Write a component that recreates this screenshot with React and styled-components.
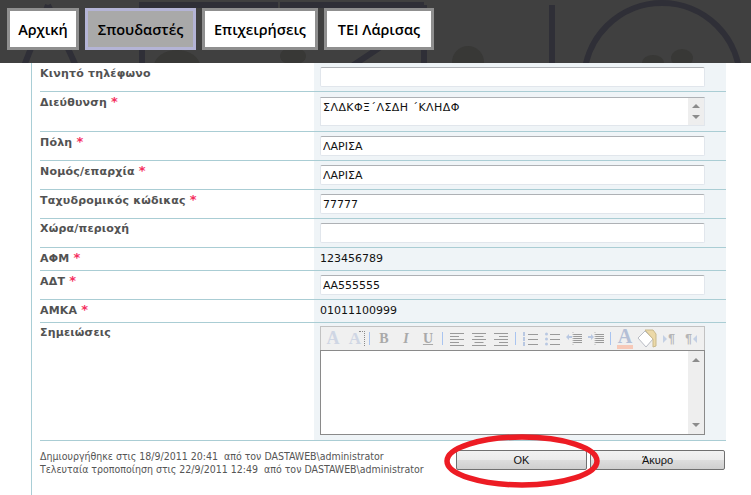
import React from "react";
import styled, { createGlobalStyle } from "styled-components";

const GlobalStyle = createGlobalStyle`
	html, body {
		margin: 0;
		padding: 0;
		background: #fff;
		overflow: hidden;
	}
`;

const TABS = [
	{ label: "Αρχική", width: 72 },
	{ label: "Σπουδαστές", width: 111, active: true },
	{ label: "Επιχειρήσεις", width: 116 },
	{ label: "ΤΕΙ Λάρισας", width: 110 },
];

const App = () => {
	return (
		<>
			<GlobalStyle />
			<Header>
				<HeaderArt />
				<Nav>
					{TABS.map(t => (
						<Tab key={t.label} $width={t.width} $active={t.active}>
							{t.label}
						</Tab>
					))}
				</Nav>
			</Header>
			<Main>
				<Form>
					<Row $height={29}>
						<Label $top={4}>Κινητό τηλέφωνο</Label>
						<Field>
							<Input readOnly value="" />
						</Field>
					</Row>
					<Row $height={40}>
						<Label>
							Διεύθυνση <Star>*</Star>
						</Label>
						<Field $top={5}>
							<MultiLine>
								<MultiText>ΣΛΔΚΦΞ΄ΛΣΔΗ ΄ΚΛΗΔΦ</MultiText>
								<ScrollBar>
									<Arrow />
									<Arrow $down />
								</ScrollBar>
							</MultiLine>
						</Field>
					</Row>
					<TextRow label="Πόλη" star value="ΛΑΡΙΣΑ" />
					<TextRow label="Νομός/επαρχία" star value="ΛΑΡΙΣΑ" />
					<TextRow label="Ταχυδρομικός κώδικας" star value="77777" />
					<TextRow label="Χώρα/περιοχή" value="" />
					<Row $height={23}>
						<Label>
							ΑΦΜ <Star>*</Star>
						</Label>
						<Field>
							<Plain>123456789</Plain>
						</Field>
					</Row>
					<TextRow label="ΑΔΤ" star value="ΑΑ555555" />
					<Row $height={23}>
						<Label>
							ΑΜΚΑ <Star>*</Star>
						</Label>
						<Field>
							<Plain>01011100999</Plain>
						</Field>
					</Row>
					<Row $height={118}>
						<Label>Σημειώσεις</Label>
						<Field $top={3}>
							<Toolbar>
								<TextIcon $size={18}>A</TextIcon>
								<TextIcon $size={17}>
									A<Dots />
								</TextIcon>
								<Sep />
								<TextIcon $size={14} $grey>
									B
								</TextIcon>
								<TextIcon $size={14} $grey $italic>
									I
								</TextIcon>
								<TextIcon $size={14} $grey $underline>
									U
								</TextIcon>
								<Sep />
								<AlignIcon widths={[14, 9, 14, 9, 14]} align="left" />
								<AlignIcon widths={[14, 9, 14, 9, 14]} align="center" />
								<AlignIcon widths={[14, 9, 14, 9, 14]} align="right" />
								<Sep />
								<ListIcon numbered />
								<ListIcon />
								<IndentIcon />
								<IndentIcon right />
								<Sep />
								<ColorIcon>A</ColorIcon>
								<BucketIcon />
								<ParaIcon />
								<ParaIcon rtl />
							</Toolbar>
							<Editor>
								<EditorBar>
									<Arrow />
									<Arrow $down />
								</EditorBar>
							</Editor>
						</Field>
					</Row>
					<Footer>
						<Stamp>
							<div>Δημιουργήθηκε στις 18/9/2011 20:41  από τον DASTAWEB\administrator</div>
							<div>Τελευταία τροποποίηση στις 22/9/2011 12:49  από τον DASTAWEB\administrator</div>
						</Stamp>
						<Buttons>
							<OkWrap>
								<Button $width={131}>OK</Button>
								<Circled viewBox="0 0 156 54" aria-hidden="true">
									<ellipse cx="78" cy="27" rx="75" ry="24" fill="none" stroke="#ed1c24" strokeWidth="5.5" />
								</Circled>
							</OkWrap>
							<Button $width={135}>Άκυρο</Button>
						</Buttons>
					</Footer>
				</Form>
			</Main>
		</>
	);
};
export default App;

const TextRow = ({ label, star, value }) => (
	<Row $height={29}>
		<Label>
			{label} {star && <Star>*</Star>}
		</Label>
		<Field>
			<Input readOnly value={value} />
		</Field>
	</Row>
);

const HeaderArt = () => (
	<ArtSvg viewBox="0 0 751 63" aria-hidden="true">
		<g fill="none" stroke="#2f2f37" strokeWidth="6">
			<path d="M48 5 L24 66 M48 5 L76 66" />
			<path d="M139 5 H278 M142 5 V66" />
			<path d="M280 5 H424 M424 5 V66 M552 5 V66" />
			<path d="M382 46 L352 66" />
			<circle cx="662" cy="81" r="78" />
		</g>
		<g fill="#383836">
			<ellipse cx="177" cy="66" rx="23" ry="16" />
			<ellipse cx="293" cy="56" rx="13" ry="9" />
			<ellipse cx="468" cy="62" rx="16" ry="16" />
			<ellipse cx="653" cy="63" rx="11" ry="8" />
			<ellipse cx="682" cy="58" rx="11" ry="9" />
		</g>
	</ArtSvg>
);

const AlignIcon = ({ widths, align }) => (
	<IconSvg viewBox="0 0 16 16">
		{widths.map((w, i) => {
			const x = align === "left" ? 1 : align === "right" ? 15 - w : 8 - w / 2;
			return <rect key={i} x={x} y={2 + i * 3} width={w} height="1" fill="#9a9a9a" />;
		})}
	</IconSvg>
);

const ListIcon = ({ numbered }) => (
	<IconSvg viewBox="0 0 16 16">
		{[3, 8, 13].map(y => (
			<g key={y}>
				{numbered ? (
					<rect x="1" y={y - 2} width="2" height="4" fill="#b9c8e2" />
				) : (
					<circle cx="2.5" cy={y} r="1.5" fill="#b9c8e2" />
				)}
				<rect x="6" y={y} width="10" height="1" fill="#9a9a9a" />
			</g>
		))}
	</IconSvg>
);

const IndentIcon = ({ right }) => (
	<IconSvg viewBox="0 0 16 16">
		<path d={right ? "M0 5 H3 V3 L6 6 L3 9 V7 H0 Z" : "M6 5 H3 V3 L0 6 L3 9 V7 H6 Z"} fill="#b9c8e2" />
		{[3, 5, 7, 9, 11].map(y => (
			<rect key={y} x="7" y={y} width="9" height="1" fill="#9a9a9a" />
		))}
		<path d="M7 1 V15" stroke="#bbb" strokeDasharray="1 1" />
	</IconSvg>
);

const BucketIcon = () => (
	<IconSvg viewBox="0 0 20 20" $wide>
		<path d="M1 9 L8 2 L16 10 L9 18 Z" fill="#fff" stroke="#b9bcc4" />
		<path d="M8 1 L16 1 L19 5 L19 17 L16 18 L16 10 Z" fill="#ecd9a8" stroke="#c9b98c" />
	</IconSvg>
);

const ParaIcon = ({ rtl }) => (
	<ParaBox $rtl={rtl}>
		<ParaArrow $rtl={rtl} />¶
	</ParaBox>
);

const Header = styled.header`
	position: relative;
	height: 63px;
	background: #404040;
	overflow: hidden;
`;

const ArtSvg = styled.svg`
	position: absolute;
	left: 0;
	top: 0;
	width: 751px;
	height: 63px;
`;

const Nav = styled.nav`
	position: relative;
	display: flex;
	gap: 6px;
	padding: 8px 0 0 7px;
`;

const Tab = styled.a`
	box-sizing: border-box;
	width: ${props => props.$width}px;
	height: 42px;
	display: flex;
	align-items: center;
	justify-content: center;
	border: 3px solid ${props => (props.$active ? "#b4b4d6" : "#8f8f8f")};
	background: ${props => (props.$active ? "#a9a9a9" : "#fff")};
	color: #000;
	font-family: "Open Sans", "DejaVu Sans", sans-serif;
	font-size: 14.5px;
	font-weight: 600;
`;

const Main = styled.main`
	box-sizing: border-box;
	min-height: calc(100vh - 63px);
	margin-left: 31px;
	border-left: 1px solid #a9ced6;
	padding-left: 8px;
`;

const Form = styled.div`
	width: 686px;
	font-family: "DejaVu Sans", Verdana, sans-serif;
	font-size: 11px;
`;

const Row = styled.div`
	box-sizing: border-box;
	display: grid;
	grid-template-columns: 274px 412px;
	height: ${props => props.$height}px;
	border-bottom: 1px solid #aacdd4;
`;

const Label = styled.div`
	padding-top: ${props => props.$top ?? 3}px;
	color: #525252;
	font-weight: 700;
	letter-spacing: 0.2px;
	line-height: 13px;
`;

const Star = styled.span`
	color: #f5305f;
	font-size: 13px;
`;

const Field = styled.div`
	box-sizing: border-box;
	padding: ${props => props.$top ?? 4}px 21px 0 6px;
	background: #eff4f7;
`;

const Input = styled.input`
	display: block;
	box-sizing: border-box;
	width: 100%;
	height: 20px;
	margin: 0;
	padding: 1px 2px 0;
	border: 1px solid #e1e6ec;
	border-top-color: #aeb1b5;
	border-radius: 2px;
	outline: none;
	background: #fff;
	color: #111;
	font: 11px "DejaVu Sans", Verdana, sans-serif;
`;

const Plain = styled.div`
	color: #111;
	line-height: 13px;
`;

const MultiLine = styled.div`
	display: flex;
	box-sizing: border-box;
	height: 29px;
	border: 1px solid #e1e6ec;
	border-top-color: #aeb1b5;
	background: #fff;
`;

const MultiText = styled.div`
	flex: 1;
	padding: 3px 2px 0;
	color: #111;
	letter-spacing: 0.45px;
	line-height: 13px;
`;

const ScrollBar = styled.div`
	width: 16px;
	display: flex;
	flex-direction: column;
	align-items: center;
	justify-content: space-between;
	padding: 6px 0;
	box-sizing: border-box;
	background: #eeeeee;
`;

const Arrow = styled.span`
	width: 0;
	height: 0;
	border-left: 4px solid transparent;
	border-right: 4px solid transparent;
	${props => (props.$down ? "border-top: 4px solid #8c8c8c;" : "border-bottom: 4px solid #8c8c8c;")}
`;

const Toolbar = styled.div`
	box-sizing: border-box;
	display: flex;
	align-items: center;
	height: 24px;
	padding-left: 1px;
	border: 1px solid #c2c2c2;
	border-bottom: 0;
	background: #f0f0f0;
`;

const IconBase = styled.span`
	position: relative;
	flex: none;
	width: 22px;
	height: 22px;
	display: flex;
	align-items: center;
	justify-content: center;
`;

const TextIcon = styled(IconBase)`
	color: ${props => (props.$grey ? "#a9a9a9" : "#cfd6e4")};
	font-family: "Liberation Serif", serif;
	font-weight: 700;
	font-size: ${props => props.$size}px;
	font-style: ${props => (props.$italic ? "italic" : "normal")};
	text-decoration: ${props => (props.$underline ? "underline" : "none")};
`;

const Dots = styled.i`
	position: absolute;
	right: 1px;
	top: 3px;
	width: 5px;
	height: 14px;
	border-top: 1px dotted #8a8a8a;
	border-right: 1px dotted #8a8a8a;
`;

const ColorIcon = styled(IconBase)`
	box-sizing: border-box;
	padding-bottom: 4px;
	color: #b4bfd6;
	font-family: "Liberation Serif", serif;
	font-weight: 700;
	font-size: 20px;
	line-height: 17px;
	&::after {
		content: "";
		position: absolute;
		left: 3px;
		bottom: 1px;
		width: 16px;
		height: 4px;
		background: #f7c9b8;
	}
`;

const IconSvg = styled.svg`
	flex: none;
	width: ${props => (props.$wide ? 20 : 16)}px;
	height: ${props => (props.$wide ? 20 : 16)}px;
	margin: 0 ${props => (props.$wide ? 1 : 3)}px;
`;

const ParaBox = styled(IconBase)`
	gap: 1px;
	flex-direction: ${props => (props.$rtl ? "row-reverse" : "row")};
	color: #b5b5b5;
	font-family: "Liberation Sans", sans-serif;
	font-size: 12px;
	font-weight: 700;
`;

const ParaArrow = styled.i`
	width: 0;
	height: 0;
	border-top: 4px solid transparent;
	border-bottom: 4px solid transparent;
	${props => (props.$rtl ? "border-right: 4px solid #c4d0e4;" : "border-left: 4px solid #c4d0e4;")}
`;

const Sep = styled.i`
	flex: none;
	width: 1px;
	height: 13px;
	margin: 0 3px;
	background: #a9c4f0;
`;

const Editor = styled.div`
	box-sizing: border-box;
	display: flex;
	justify-content: flex-end;
	height: 85px;
	border: 1px solid #8a8a8a;
	background: #fff;
`;

const EditorBar = styled(ScrollBar)`
	padding: 7px 0;
`;

const Footer = styled.div`
	display: flex;
	justify-content: space-between;
	padding-top: 8px;
`;

const Stamp = styled.div`
	padding-top: 1px;
	color: #555;
	font-family: "DejaVu Sans Condensed", "DejaVu Sans", sans-serif;
	font-size: 10.5px;
	line-height: 13px;
	white-space: pre;
`;

const Buttons = styled.div`
	display: flex;
	gap: 3px;
	margin-right: 1px;
`;

const OkWrap = styled.div`
	position: relative;
`;

const Button = styled.button`
	display: block;
	width: ${props => props.$width}px;
	height: 20px;
	margin: 1px 0 0;
	padding: 0;
	border: 1px solid #707070;
	border-radius: 2px;
	background: linear-gradient(#f2f2f2 0%, #ebebeb 48%, #dddddd 50%, #cfcfcf 100%);
	color: #111;
	font-family: "Liberation Sans", sans-serif;
	font-size: 11px;
`;

const Circled = styled.svg`
	position: absolute;
	left: -12px;
	top: -15px;
	width: 156px;
	height: 54px;
	pointer-events: none;
`;
